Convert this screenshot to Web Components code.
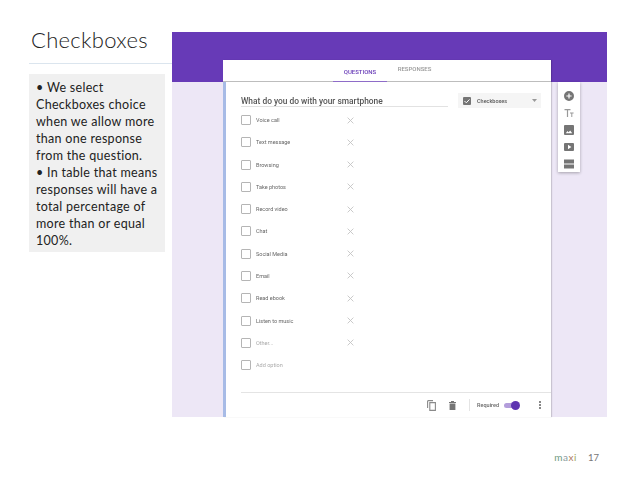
<!DOCTYPE html>
<html lang="en">
<head>
<meta charset="UTF-8">
<title>Checkboxes</title>
<style>
  html, body { margin: 0; background: #fff; }
  body { font-family: Lato, "Open Sans", sans-serif; }
</style>
</head>
<body>
<slide-page>
  <slide-side slot="side" heading="Checkboxes">
    • We select Checkboxes choice when we allow more than one response from the question.<br>
    • In table that means responses will have a total percentage of more than or equal 100%.
  </slide-side>
  <form-shot slot="main" question="What do you do with your smartphone">
    <form-option>Voice call</form-option>
    <form-option>Text message</form-option>
    <form-option>Browsing</form-option>
    <form-option>Take photos</form-option>
    <form-option>Record video</form-option>
    <form-option>Chat</form-option>
    <form-option>Social Media</form-option>
    <form-option>Email</form-option>
    <form-option>Read ebook</form-option>
    <form-option>Listen to music</form-option>
    <form-option muted>Other...</form-option>
    <form-option muted noremove>Add option</form-option>
  </form-shot>
</slide-page>
<script>
(function() {
  function define(name, html, init) {
    customElements.define(name, class extends HTMLElement {
      constructor() {
        super();
        this.attachShadow({mode: 'open'});
        this.shadowRoot.innerHTML = html;
      }
      connectedCallback() {
        if (init) init(this, this.shadowRoot);
      }
    });
  }

  define('slide-page', `
    <style>
      :host { display: block; width: 638px; height: 479px; overflow: hidden; }
      .top { display: flex; padding-left: 29px; height: 446px; }
      .side { width: 143px; flex: none; }
      .main { width: 435px; flex: none; padding-top: 32px; }
      footer { display: flex; justify-content: flex-end; align-items: center; gap: 11px; padding: 1px 39px 0 0; height: 20px; font-size: 9.5px; color: #777; }
      .logo { font-size: 10px; letter-spacing: .5px; }
      .logo i { font-style: normal; }
    </style>
    <div class="top">
      <div class="side"><slot name="side"></slot></div>
      <div class="main"><slot name="main"></slot></div>
    </div>
    <footer>
      <span class="logo"><i style="color:#6f9a80">m</i><i style="color:#8a9aa0">a</i><i style="color:#b07a60">x</i><i style="color:#a0a860">i</i></span>
      <span>17</span>
    </footer>`);

  define('slide-side', `
    <style>
      :host { display: block; }
      h1 { margin: 0; padding: 25px 0 0 2px; height: 38px; font: 300 22px/29px Lato, sans-serif; color: #222; letter-spacing: .3px; border-bottom: 1px solid #dbe5ee; }
      .note { margin: 10px 7px 0 0; padding: 5px 0 8px 7px; background: #f0f0f0; font: 400 12.5px/17px Lato, sans-serif; color: #222; letter-spacing: .3px; height: 165px; }
    </style>
    <h1></h1>
    <div class="note"><slot></slot></div>`,
    function(el, root) { root.querySelector('h1').textContent = el.getAttribute('heading'); });

  define('form-option', `
    <style>
      :host { display: flex; align-items: center; height: 22.27px; color: #666; font: 400 5.5px Roboto, sans-serif; }
      :host([muted]) { color: #aaa; }
      .box { width: 8px; height: 8px; border: 1px solid #b5b5b5; border-radius: 1px; margin-right: 5px; flex: none; }
      .label { width: 91px; flex: none; }
      svg { width: 7px; height: 7px; stroke: #c2c2c2; stroke-width: 1; fill: none; }
      :host([noremove]) svg { visibility: hidden; }
    </style>
    <span class="box"></span>
    <span class="label"><slot></slot></span>
    <svg viewBox="0 0 8 8"><path d="M.7.7l6.6 6.6M7.3.7L.7 7.3"/></svg>`);

  define('side-tools', `
    <style>
      :host { display: flex; flex-direction: column; align-items: center; gap: 7px; width: 22px; height: 90px; box-sizing: border-box; padding-top: 9px; background: #fff; box-shadow: 0 1px 3px rgba(0,0,0,.3); }
      svg { width: 10px; height: 10px; fill: #757575; flex: none; }
    </style>
    <svg viewBox="0 0 10 10"><path fill-rule="evenodd" d="M5 0a5 5 0 1 0 0 10A5 5 0 0 0 5 0zM4.400 2.400h1.200v2h2v1.200h-2v2H4.400v-2h-2V4.400h2z"/></svg>
    <svg viewBox="0 0 10 10" style="fill:#999"><path d="M.5 1h6v1.200H4.100V9H2.900V2.200H.5zM6 4.400h3.600v1H8.300V9H7.300V5.400H6z"/></svg>
    <svg viewBox="0 0 10 10"><path fill-rule="evenodd" d="M1 0h8a1 1 0 0 1 1 1v8a1 1 0 0 1-1 1H1a1 1 0 0 1-1-1V1a1 1 0 0 1 1-1zm.8 8.200h6.400L6.200 5.400 4.600 7.300 3.500 6z"/></svg>
    <svg viewBox="0 0 10 10"><path fill-rule="evenodd" d="M1 1h8a1 1 0 0 1 1 1v6a1 1 0 0 1-1 1H1a1 1 0 0 1-1-1V2a1 1 0 0 1 1-1zm3 1.800v4.400L7.400 5z"/></svg>
    <svg viewBox="0 0 10 10"><path d="M0 .5h10v4H0zM0 5.500h10v4H0z"/></svg>`);

  define('form-shot', `
    <style>
      :host { display: block; width: 435px; height: 385px; background: linear-gradient(#673ab7 50px, #ede7f6 50px); font-family: Roboto, sans-serif; filter: blur(.35px); }
      .wrap { display: flex; align-items: flex-start; padding: 28px 0 0 51px; }
      .card { width: 328px; height: 357px; background: #fff; flex: none; display: flex; flex-direction: column; box-shadow: 1px 0 1px rgba(0,0,0,.15); }
      .tabs { height: 22px; flex: none; box-sizing: border-box; display: flex; padding-left: 110px; border-bottom: 1px solid #bdbdbd; font-size: 6px; font-weight: 500; color: #999; }
      .tab { width: 54px; text-align: center; line-height: 23px; box-sizing: border-box; }
      .tab.on { color: #673ab7; border-bottom: 1px solid #8e6cc8; height: 22px; }
      .tab + .tab { margin-top: -2px; width: 52px; line-height: 21px; padding-left: 3px; }
      .body { flex: 1; border-left: 3px solid #a7bbe6; padding: 0 0 0 15px; display: flex; flex-direction: column; }
      .head { display: flex; align-items: flex-start; padding-top: 11px; height: 27px; box-sizing: border-box; }
      .q { width: 207px; height: 14px; box-sizing: border-box; border-bottom: 1px solid #e2e2e2; font-size: 8.4px; font-weight: 500; line-height: 16px; color: #555; white-space: nowrap; }
      .type { margin-left: 10px; width: 83px; height: 15px; background: #f5f5f5; display: flex; align-items: center; padding-left: 5px; box-sizing: border-box; font-size: 5.5px; font-weight: 500; color: #555; }
      .type svg { width: 8px; height: 8px; margin-right: 6px; }
      .type .arrow { width: 5px; height: 3px; margin: 0 4px 0 auto; }
      .options { display: block; margin-top: 0; height: 283px; }
      .foot { margin-right: 0; border-top: 1px solid #e4e4e4; height: 25px; box-sizing: border-box; display: flex; align-items: center; justify-content: flex-end; font-size: 5.5px; font-weight: 500; color: #666; }
      .foot svg { flex: none; }
      .sep { width: 1px; height: 12px; background: #e4e4e4; margin: 0 7px 0 13px; }
      .toggle { position: relative; width: 15px; height: 5px; border-radius: 3px; background: #b39ddb; margin: 0 20px 0 5px; }
      .toggle::after { content: ""; position: absolute; right: -1px; top: -2px; width: 9px; height: 9px; border-radius: 50%; background: #5e35b1; }
      .tools { margin: 22px 0 0 7px; }
    </style>
    <div class="wrap">
      <div class="card">
        <div class="tabs"><div class="tab on">QUESTIONS</div><div class="tab">RESPONSES</div></div>
        <div class="body">
          <div class="head">
            <div class="q"></div>
            <div class="type">
              <svg viewBox="0 0 8 8"><rect width="8" height="8" rx="1" fill="#757575"/><path d="M1.500 4l1.800 1.800 3.200-3.400" fill="none" stroke="#fff"/></svg>
              Checkboxes
              <svg class="arrow" viewBox="0 0 5 3"><path d="M0 0h5L2.500 3z" fill="#999"/></svg>
            </div>
          </div>
          <div class="options"><slot></slot></div>
          <div class="foot">
            <svg width="9" height="11" viewBox="0 0 9 11"><path fill="none" stroke="#8a8a8a" stroke-width="1.100" d="M6 .6H1.200a.6.600 0 0 0-.6.600V8M2.800 2.600h5.600v7.800H2.800z"/></svg>
            <svg width="7" height="9" viewBox="0 0 7 9" style="margin-left:13px"><path fill="#757575" d="M0 1h7v1H0zM2 0h3v1H2zM.6 2.500h5.800V9H.6z"/></svg>
            <span class="sep"></span>
            <span>Required</span>
            <span class="toggle"></span>
            <svg width="2" height="8" viewBox="0 0 2 8" style="margin:0 10px 0 0"><path fill="#888" d="M0 0h2v2H0zM0 3h2v2H0zM0 6h2v2H0z"/></svg>
          </div>
        </div>
      </div>
      <side-tools class="tools"></side-tools>
    </div>`,
    function(el, root) { root.querySelector('.q').textContent = el.getAttribute('question'); });
})();
</script>
</body>
</html>
